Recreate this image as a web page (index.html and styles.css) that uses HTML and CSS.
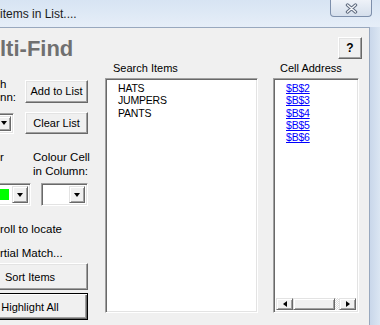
FILE: index.html
```html
<!DOCTYPE html>
<html lang="en">
<head>
    <meta charset="UTF-8">
    <meta name="viewport" content="width=device-width, initial-scale=1.0">
    <title>Multi-Find</title>
    <link rel="stylesheet" href="styles.css">
</head>
<body>
    <div class="window">
        <!-- Title bar -->
        <div class="titlebar">
            <span class="title">items in List....</span>
            <button class="close-btn">
                <svg width="13" height="11" viewBox="0 0 13 11">
                    <path d="M2.5 2 L10.5 9 M10.5 2 L2.5 9" stroke="#5e6a7e" stroke-width="3.4" stroke-linecap="round"/>
                    <path d="M2.5 2 L10.5 9 M10.5 2 L2.5 9" stroke="#f5f7fa" stroke-width="1.4" stroke-linecap="round"/>
                </svg>
            </button>
        </div>

        <div class="frame">
            <div class="client">
                <div class="header">
                    <h1>lti-Find</h1>
                    <button class="btn help-btn">?</button>
                </div>

                <div class="main">
                    <!-- Left controls -->
                    <div class="left-panel">
                        <div class="row row-a">
                            <div class="label label-a">h<br>nn:</div>
                            <button class="btn side-btn">Add to List</button>
                        </div>
                        <div class="row row-b">
                            <div class="combo combo-col">
                                <div class="combo-value"></div>
                                <div class="combo-btn"><span class="arrow-down"></span></div>
                            </div>
                            <button class="btn side-btn">Clear List</button>
                        </div>
                        <div class="row row-c">
                            <div class="label label-c">r</div>
                            <div class="label label-cell">Colour Cell<br>in Column:</div>
                        </div>
                        <div class="row row-d">
                            <div class="combo combo-green">
                                <div class="combo-value"><span class="swatch"></span></div>
                                <div class="combo-btn"><span class="arrow-down"></span></div>
                            </div>
                            <div class="combo combo-white">
                                <div class="combo-value"></div>
                                <div class="combo-btn"><span class="arrow-down"></span></div>
                            </div>
                        </div>
                        <div class="label option first-option">roll to locate</div>
                        <div class="label option">rtial Match...</div>
                        <button class="btn wide-btn">Sort Items</button>
                        <button class="btn wide-btn default-btn">Highlight All</button>
                    </div>

                    <!-- Search items list -->
                    <div class="col search-col">
                        <div class="col-label">Search Items</div>
                        <div class="listbox">
                            <div class="items">
                                <div>HATS</div>
                                <div>JUMPERS</div>
                                <div>PANTS</div>
                            </div>
                        </div>
                    </div>

                    <!-- Cell address list -->
                    <div class="col cell-col">
                        <div class="col-label">Cell Address</div>
                        <div class="listbox">
                            <div class="items">
                                <div><a href="#">$B$2</a></div>
                                <div><a href="#">$B$3</a></div>
                                <div><a href="#">$B$4</a></div>
                                <div><a href="#">$B$5</a></div>
                                <div><a href="#">$B$6</a></div>
                            </div>
                            <div class="hscroll">
                                <div class="sb-btn"><span class="arrow-left"></span></div>
                                <div class="sb-thumb"></div>
                                <div class="sb-track"></div>
                                <div class="sb-btn"><span class="arrow-right"></span></div>
                            </div>
                        </div>
                    </div>
                </div>
            </div>
            <div class="frame-edge"></div>
        </div>
    </div>
</body>
</html>
```

FILE: styles.css
```css
body { margin: 0; width: 380px; height: 325px; overflow: hidden; font-family: "Liberation Sans", Arial, sans-serif; background: #d3e0f0; }
button { font-family: inherit; padding: 0; margin: 0; cursor: pointer; }

.window { width: 380px; height: 325px; display: flex; flex-direction: column; }

/* title bar */
.titlebar { height: 27px; flex: none; display: flex; justify-content: space-between; align-items: flex-start; background: linear-gradient(#d7e4f3, #e6eef8); }
.title { font-size: 12px; line-height: 15px; padding-top: 7px; color: #1b1b1b; white-space: nowrap; }
.close-btn { width: 42px; height: 17px; margin-right: 8px; border: 1px solid #7d8fab; border-top: none; border-radius: 0 0 4px 4px; background: linear-gradient(#eef2f8, #d5dfec); display: flex; align-items: center; justify-content: center; }

.frame { flex: 1; display: flex; }
.frame-edge { flex: 1; background: linear-gradient(90deg, #c9d7ea, #dbe6f3); }
.client { width: 369px; flex: none; background: #f0f0f0; border-top: 1px solid #98a8be; border-right: 1px solid #98a8be; overflow: hidden; }

/* header */
.header { height: 32px; display: flex; justify-content: space-between; align-items: flex-start; }
.header h1 { margin: 9px 0 0; font-size: 22px; line-height: 24px; font-weight: bold; color: #707070; white-space: nowrap; }
.help-btn { width: 24px; height: 22px; margin: 9px 7px 0 0; font-size: 12px; font-weight: bold; }

/* common win controls */
.btn { background: #f0f0f0; color: #000; border: 1px solid; border-color: #fff #696969 #696969 #fff; box-shadow: inset -1px -1px #a0a0a0, inset 1px 1px #e3e3e3; box-sizing: border-box; }
.default-btn { border: 1px solid #000; box-shadow: inset 1px 1px #fff, inset -1px -1px #696969, inset -2px -2px #a0a0a0; }
.sunken { border: 1px solid; }
.combo, .listbox { background: #fff; border: 1px solid; border-color: #a0a0a0 #fff #fff #a0a0a0; box-shadow: inset 1px 1px #696969, inset -1px -1px #e3e3e3; box-sizing: border-box; }

.main { display: flex; }

/* left panel */
.left-panel { width: 88px; flex: none; padding-top: 18px; display: flex; flex-direction: column; align-items: flex-start; }
.row { display: flex; align-items: center; }
.label { font-size: 11.5px; line-height: 13px; white-space: nowrap; }
.label-a { width: 25px; }
.side-btn { width: 63px; font-size: 11px; }
.row-a .side-btn { height: 23px; }
.row-b { margin-top: 8px; }
.row-b .side-btn { height: 22px; margin-left: 11px; }
.row-c { margin-top: 16px; align-items: flex-start; }
.row-c .label { line-height: 14px; }
.label-c { width: 33px; }
.row-d { margin-top: 5px; }
.option { line-height: 14px; }
.first-option { margin-top: 16px; }
.option + .option { margin-top: 10px; }
.wide-btn { width: 116px; height: 27px; margin-left: -28px; font-size: 11px; margin-top: 3px; }

.combo { display: flex; padding: 2px; }
.combo-value { flex: 1; display: flex; align-items: center; }
.combo-btn { width: 16px; display: flex; align-items: center; justify-content: center; background: #f0f0f0; border: 1px solid; border-color: #e3e3e3 #696969 #696969 #e3e3e3; box-shadow: inset 1px 1px #fff, inset -1px -1px #a0a0a0; box-sizing: border-box; }
.arrow-down { width: 0; height: 0; border-left: 3.5px solid transparent; border-right: 3.5px solid transparent; border-top: 4px solid #000; }
.combo-col { width: 44px; height: 21px; margin-left: -30px; }
.combo-col .combo-btn { width: 14px; }
.combo-green { width: 51px; height: 23px; margin-left: -20px; }
.combo-green .combo-value { padding-right: 3px; }
.swatch { display: block; width: 100%; height: 11px; background: #00ff00; }
.combo-white { width: 47px; height: 23px; margin-left: 10px; }

/* list columns */
.col { display: flex; flex-direction: column; }
.search-col { width: 153px; margin-left: 17px; }
.cell-col { width: 86px; margin-left: 15px; }
.col-label { height: 18px; font-size: 11px; line-height: 16px; padding-left: 8px; white-space: nowrap; }
.search-col .col-label { padding-left: 8px; }
.cell-col .col-label { padding-left: 7px; }
.listbox { height: 235px; display: flex; flex-direction: column; padding: 2px; }
.items { flex: 1; padding: 1px 0 0 10px; font-size: 10.5px; line-height: 12.3px; letter-spacing: -0.2px; }
.items a { color: #0000ff; }

/* horizontal scrollbar */
.hscroll { height: 12px; display: flex; }
.sb-btn { width: 17px; display: flex; align-items: center; justify-content: center; background: #f0f0f0; border: 1px solid; border-color: #e3e3e3 #696969 #696969 #e3e3e3; box-shadow: inset 1px 1px #fff, inset -1px -1px #a0a0a0; box-sizing: border-box; }
.sb-thumb { width: 42px; background: #f0f0f0; border: 1px solid; border-color: #e3e3e3 #696969 #696969 #e3e3e3; box-shadow: inset 1px 1px #fff, inset -1px -1px #a0a0a0; box-sizing: border-box; }
.sb-track { flex: 1; background: repeating-conic-gradient(#fff 0 25%, #dcdcdc 0 50%) 0 0 / 2px 2px; }
.arrow-left { width: 0; height: 0; border-top: 3.5px solid transparent; border-bottom: 3.5px solid transparent; border-right: 4px solid #000; }
.arrow-right { width: 0; height: 0; border-top: 3.5px solid transparent; border-bottom: 3.5px solid transparent; border-left: 4px solid #000; }
```
